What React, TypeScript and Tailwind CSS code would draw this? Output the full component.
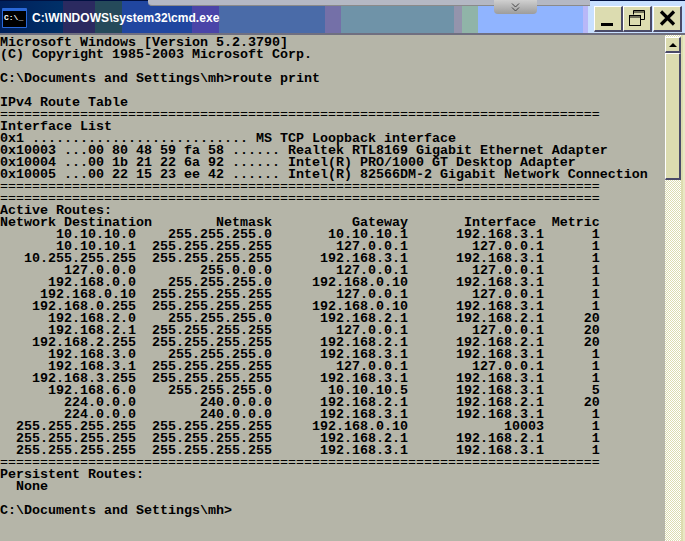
const rule = "=".repeat(75);

const routes = [
  ["10.10.10.0", "255.255.255.0", "10.10.10.1", "192.168.3.1", "1"],
  ["10.10.10.1", "255.255.255.255", "127.0.0.1", "127.0.0.1", "1"],
  ["10.255.255.255", "255.255.255.255", "192.168.3.1", "192.168.3.1", "1"],
  ["127.0.0.0", "255.0.0.0", "127.0.0.1", "127.0.0.1", "1"],
  ["192.168.0.0", "255.255.255.0", "192.168.0.10", "192.168.3.1", "1"],
  ["192.168.0.10", "255.255.255.255", "127.0.0.1", "127.0.0.1", "1"],
  ["192.168.0.255", "255.255.255.255", "192.168.0.10", "192.168.3.1", "1"],
  ["192.168.2.0", "255.255.255.0", "192.168.2.1", "192.168.2.1", "20"],
  ["192.168.2.1", "255.255.255.255", "127.0.0.1", "127.0.0.1", "20"],
  ["192.168.2.255", "255.255.255.255", "192.168.2.1", "192.168.2.1", "20"],
  ["192.168.3.0", "255.255.255.0", "192.168.3.1", "192.168.3.1", "1"],
  ["192.168.3.1", "255.255.255.255", "127.0.0.1", "127.0.0.1", "1"],
  ["192.168.3.255", "255.255.255.255", "192.168.3.1", "192.168.3.1", "1"],
  ["192.168.6.0", "255.255.255.0", "10.10.10.5", "192.168.3.1", "5"],
  ["224.0.0.0", "240.0.0.0", "192.168.2.1", "192.168.2.1", "20"],
  ["224.0.0.0", "240.0.0.0", "192.168.3.1", "192.168.3.1", "1"],
  ["255.255.255.255", "255.255.255.255", "192.168.0.10", "10003", "1"],
  ["255.255.255.255", "255.255.255.255", "192.168.2.1", "192.168.2.1", "1"],
  ["255.255.255.255", "255.255.255.255", "192.168.3.1", "192.168.3.1", "1"],
];

const routeLines = routes.map(
  ([dest, mask, gw, iface, metric]) =>
    dest.padStart(17) + mask.padStart(17) + gw.padStart(17) + iface.padStart(17) + metric.padStart(7)
);

const output = [
  "Microsoft Windows [Version 5.2.3790]",
  "(C) Copyright 1985-2003 Microsoft Corp.",
  "",
  "C:\\Documents and Settings\\mh>route print",
  "",
  "IPv4 Route Table",
  rule,
  "Interface List",
  "0x1 ........................... MS TCP Loopback interface",
  "0x10003 ...00 80 48 59 fa 58 ...... Realtek RTL8169 Gigabit Ethernet Adapter",
  "0x10004 ...00 1b 21 22 6a 92 ...... Intel(R) PRO/1000 GT Desktop Adapter",
  "0x10005 ...00 22 15 23 ee 42 ...... Intel(R) 82566DM-2 Gigabit Network Connection",
  rule,
  rule,
  "Active Routes:",
  "Network Destination        Netmask          Gateway       Interface  Metric",
  ...routeLines,
  rule,
  "Persistent Routes:",
  "  None",
  "",
  "C:\\Documents and Settings\\mh>",
];

const btn =
  "w-[29px] h-[26px] flex items-center justify-center bg-[#dcdcb0] border-l border-t border-l-white border-t-white border-r-2 border-b-2 border-r-[#4a4a68] border-b-[#4a4a68]";

const App = () => {
  return (
    <div className="w-[685px] h-[541px] overflow-hidden flex flex-col relative bg-[#b5b5a8]">
      {/* title bar */}
      <div className="h-[33px] shrink-0 flex items-center border-t border-[#001040] bg-[linear-gradient(90deg,#00205c_0,#003068_63px,#2b2a60_63px,#2b2a60_95px,#254a5a_95px,#254a5a_122px,#2046a0_122px,#2046a0_192px,#4a44a8_192px,#4a44a8_219px,#4a6ba8_219px,#4a6ba8_325px,#7470a8_325px,#7470a8_341px,#6f93a8_341px,#6f93a8_454px,#9494ac_454px,#9494ac_462px,#90b4a8_462px,#90b4a8_478px,#90b4ff_478px,#90b4ff_583px,#b8b8f8_583px,#b8b8f8_588px,#c8e0ff_588px,#c8e0ff_685px)]">
        <div className="ml-[2px] w-[25px] h-[20px] mt-[2px] shrink-0 rounded-[1px] bg-[#2a68d8] pt-[3px] px-[1px]">
          <div className="h-[16px] bg-black text-white text-[8px] leading-[14px] font-bold pl-[1px] font-['Liberation_Mono',monospace]">
            C:\_
          </div>
        </div>
        <span className="ml-[5px] mt-[2px] text-white font-bold text-[12px] tracking-[0.05px] font-['Liberation_Sans',sans-serif] whitespace-nowrap">
          C:\WINDOWS\system32\cmd.exe
        </span>
        <div className="ml-auto mr-[3px] mt-[3px] flex">
          <div className={btn}>
            <div className="w-[12px] h-[3px] bg-black mt-[12px] mr-[2px]" />
          </div>
          <div className={btn}>
            <svg width="18" height="18" viewBox="0 0 18 18" fill="none" stroke="black">
              <path d="M5.5 5.5V1.5H16.5V10.5H13M5.5 3H16.5" />
              <rect x="1.5" y="6.5" width="11" height="10" />
              <path d="M1.5 8H12.5" />
            </svg>
          </div>
          <div className={`${btn} ml-[1px]`}>
            <svg width="17" height="16" viewBox="0 0 17 16" stroke="black" strokeWidth="3.2">
              <path d="M2 1.5L15 14.5M15 1.5L2 14.5" />
            </svg>
          </div>
        </div>
      </div>

      {/* top slide bar */}
      <div className="absolute top-0 left-[148px] w-[442px] h-[6px] bg-[#b4b8c4] rounded-bl-[4px] border-b border-[#8a8a8a]" />
      <div className="absolute top-0 left-[494px] w-[43px] h-[14px] rounded-b-[4px] bg-gradient-to-b from-[#d0d0d0] to-[#9c9c9c] flex items-center justify-center">
        <svg width="9" height="9" viewBox="0 0 9 9" fill="none" stroke="#444">
          <path d="M1 0.5L4.5 4L8 0.5M1 4.5L4.5 8L8 4.5" />
        </svg>
      </div>

      <div className="h-[2px] shrink-0 bg-[#6f6f80]" />

      {/* console */}
      <div className="flex-1 flex min-h-0">
        <pre className="flex-1 pt-[2px] pl-0 text-black text-[13.33px] leading-[12px] font-bold font-['Liberation_Mono',monospace] overflow-hidden">
          {output.map((line, i) => (
            <div key={i} className={`h-[12px] ${line === rule ? "font-normal" : ""}`}>
              {line}
            </div>
          ))}
        </pre>

        {/* scrollbar */}
        <div className="w-[16px] shrink-0 flex flex-col bg-[repeating-conic-gradient(#ffffff_0_25%,#dcdcb0_0_50%)] bg-[length:2px_2px]">
          <div className="h-[16px] mt-[2px] flex items-center justify-center bg-[#dcdcb0] border-l border-t border-white border-r-2 border-b-2 border-r-[#4a4a68] border-b-[#4a4a68]">
            <div className="w-0 h-0 border-x-[4px] border-x-transparent border-b-[4px] border-b-black" />
          </div>
          <div className="h-[127px] bg-[#dcdcb0] border-l border-t border-white border-r-2 border-b-2 border-r-[#4a4a68] border-b-[#4a4a68]" />
        </div>
        <div className="w-[4px] shrink-0 bg-[#e8e8c4] border-l-2 border-[#dcdcb0]" />
      </div>
    </div>
  );
};

export default App;
